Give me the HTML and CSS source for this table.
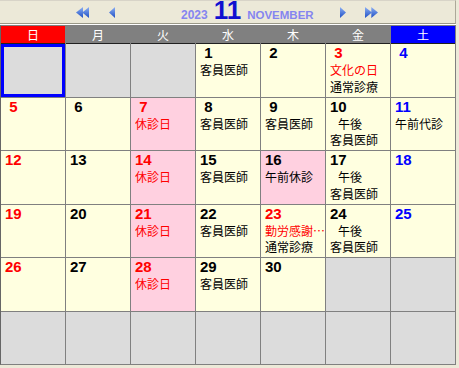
FILE: index.html
```html
<!DOCTYPE html>
<html lang="ja">
<head>
<meta charset="utf-8">
<link rel="stylesheet" href="styles.css">
</head>
<body>
<div class="cal">
  <div class="topbar">
    <svg class="ico dbl-l" width="13" height="11" viewBox="0 0 13 11">
      <defs><linearGradient id="g1" x1="0" y1="0" x2="0" y2="1"><stop offset="0" stop-color="#8cb0f4"/><stop offset="1" stop-color="#1f4fc4"/></linearGradient></defs>
      <path d="M7 0 L0 5.5 L7 11Z" fill="url(#g1)"/>
      <path d="M13 0 L6.3 5.5 L13 11Z" fill="url(#g1)"/>
    </svg>
    <svg class="ico sgl-l" width="6" height="11" viewBox="0 0 6 11">
      <defs><linearGradient id="g2" x1="0" y1="0" x2="0" y2="1"><stop offset="0" stop-color="#8cb0f4"/><stop offset="1" stop-color="#1f4fc4"/></linearGradient></defs>
      <path d="M6 0 L0 5.5 L6 11Z" fill="url(#g2)"/>
    </svg>
    <div class="title"><span class="year">2023</span><span class="mon">11</span><span class="name">NOVEMBER</span></div>
    <svg class="ico sgl-r" width="6" height="11" viewBox="0 0 6 11">
      <defs><linearGradient id="g3" x1="0" y1="0" x2="0" y2="1"><stop offset="0" stop-color="#8cb0f4"/><stop offset="1" stop-color="#1f4fc4"/></linearGradient></defs>
      <path d="M0 0 L6 5.5 L0 11Z" fill="url(#g3)"/>
    </svg>
    <svg class="ico dbl-r" width="13" height="11" viewBox="0 0 13 11">
      <defs><linearGradient id="g4" x1="0" y1="0" x2="0" y2="1"><stop offset="0" stop-color="#8cb0f4"/><stop offset="1" stop-color="#1f4fc4"/></linearGradient></defs>
      <path d="M0 0 L7 5.5 L0 11Z" fill="url(#g4)"/>
      <path d="M6.3 0 L13 5.5 L6.3 11Z" fill="url(#g4)"/>
    </svg>
  </div>
  <div class="grid">
    <div class="wd sun">日</div>
    <div class="wd">月</div>
    <div class="wd">火</div>
    <div class="wd">水</div>
    <div class="wd">木</div>
    <div class="wd">金</div>
    <div class="wd sat">土</div>

    <div class="c e sel"></div>
    <div class="c e"></div>
    <div class="c e"></div>
    <div class="c"><div class="n">&nbsp;1</div><div class="t">客員医師</div></div>
    <div class="c"><div class="n">&nbsp;2</div></div>
    <div class="c"><div class="n red">&nbsp;3</div><div class="t red">文化の日</div><div class="t">通常診療</div></div>
    <div class="c"><div class="n blue">&nbsp;4</div></div>

    <div class="c"><div class="n red">&nbsp;5</div></div>
    <div class="c"><div class="n">&nbsp;6</div></div>
    <div class="c p"><div class="n red">&nbsp;7</div><div class="t red">休診日</div></div>
    <div class="c"><div class="n">&nbsp;8</div><div class="t">客員医師</div></div>
    <div class="c"><div class="n">&nbsp;9</div><div class="t">客員医師</div></div>
    <div class="c"><div class="n">10</div><div class="t ind">午後</div><div class="t">客員医師</div></div>
    <div class="c"><div class="n blue">11</div><div class="t">午前代診</div></div>

    <div class="c"><div class="n red">12</div></div>
    <div class="c"><div class="n">13</div></div>
    <div class="c p"><div class="n red">14</div><div class="t red">休診日</div></div>
    <div class="c"><div class="n">15</div><div class="t">客員医師</div></div>
    <div class="c p"><div class="n">16</div><div class="t">午前休診</div></div>
    <div class="c"><div class="n">17</div><div class="t ind">午後</div><div class="t">客員医師</div></div>
    <div class="c"><div class="n blue">18</div></div>

    <div class="c"><div class="n red">19</div></div>
    <div class="c"><div class="n">20</div></div>
    <div class="c p"><div class="n red">21</div><div class="t red">休診日</div></div>
    <div class="c"><div class="n">22</div><div class="t">客員医師</div></div>
    <div class="c"><div class="n red">23</div><div class="t red trunc">勤労感謝の日</div><div class="t">通常診療</div></div>
    <div class="c"><div class="n">24</div><div class="t ind">午後</div><div class="t">客員医師</div></div>
    <div class="c"><div class="n blue">25</div></div>

    <div class="c"><div class="n red">26</div></div>
    <div class="c"><div class="n">27</div></div>
    <div class="c p"><div class="n red">28</div><div class="t red">休診日</div></div>
    <div class="c"><div class="n">29</div><div class="t">客員医師</div></div>
    <div class="c"><div class="n">30</div></div>
    <div class="c e"></div>
    <div class="c e"></div>

    <div class="c e"></div>
    <div class="c e"></div>
    <div class="c e"></div>
    <div class="c e"></div>
    <div class="c e"></div>
    <div class="c e"></div>
    <div class="c e"></div>
  </div>
</div>
</body>
</html>
```
FILE: styles.css
```css
html, body {
  margin: 0;
  padding: 0;
}
body {
  background: #ece9d8;
  width: 459px;
  height: 368px;
  overflow: hidden;
  font-family: "Noto Sans CJK JP", sans-serif;
}
.cal {
  width: 456px;
}
.topbar {
  box-sizing: border-box;
  height: 24px;
  border-top: 1px solid #d8d4c8;
  border-right: 1px solid #aca899;
  border-bottom: 1px solid #9a9888;
  box-shadow: 0 1px 0 #ffffff;
  display: flex;
  align-items: center;
  background: #ece9d8;
}
.ico {
  display: block;
  flex: none;
}
.dbl-l { margin-left: 76px; }
.sgl-l { margin-left: 20px; }
.title {
  margin-left: 66px;
  font-family: "Liberation Sans", Arial, sans-serif;
  font-weight: bold;
  line-height: 22px;
  white-space: nowrap;
}
.year {
  font-size: 12px;
  color: #8585f0;
}
.mon {
  font-size: 26px;
  line-height: 22px;
  color: #1010d0;
  margin: 0 6px 0 6px;
}
.name {
  font-size: 11.5px;
  color: #8585f0;
}
.sgl-r { margin-left: 26px; }
.dbl-r { margin-left: 19px; }

.grid {
  box-sizing: border-box;
  width: 456px;
  height: 340px;
  margin-top: 1px;
  display: grid;
  grid-template-columns: repeat(7, 64px);
  grid-template-rows: 17px repeat(6, 1fr);
  gap: 1px;
  background: #808080;
  border: 1px solid #808080;
  border-left-color: #666666;
}
.wd {
  background: #808080;
  color: #ffffff;
  font-size: 12px;
  line-height: 17px;
  text-align: center;
  box-shadow: 0 1px 0 #202020;
}
.wd.sun { background: #ff0000; }
.wd.sat { background: #0000ff; }

.c {
  background: #ffffe0;
  padding-left: 4px;
  overflow: hidden;
  min-width: 0;
}
.c.p { background: #ffd0e0; }
.c.e { background: #dcdcdc; }
.c.sel {
  box-sizing: border-box;
  border: 3px solid #0000ff;
}
.n {
  font-family: "Liberation Sans", Arial, sans-serif;
  font-weight: bold;
  font-size: 15px;
  line-height: 18px;
  color: #000000;
  white-space: nowrap;
}
.t {
  font-size: 12px;
  line-height: 16.5px;
  color: #000000;
  white-space: nowrap;
  overflow: hidden;
  text-overflow: ellipsis;
}
.t.trunc {
  margin-right: -3px;
}
.t.ind { padding-left: 8px; }
.red { color: #ff0000; }
.blue { color: #0000ff; }
```
